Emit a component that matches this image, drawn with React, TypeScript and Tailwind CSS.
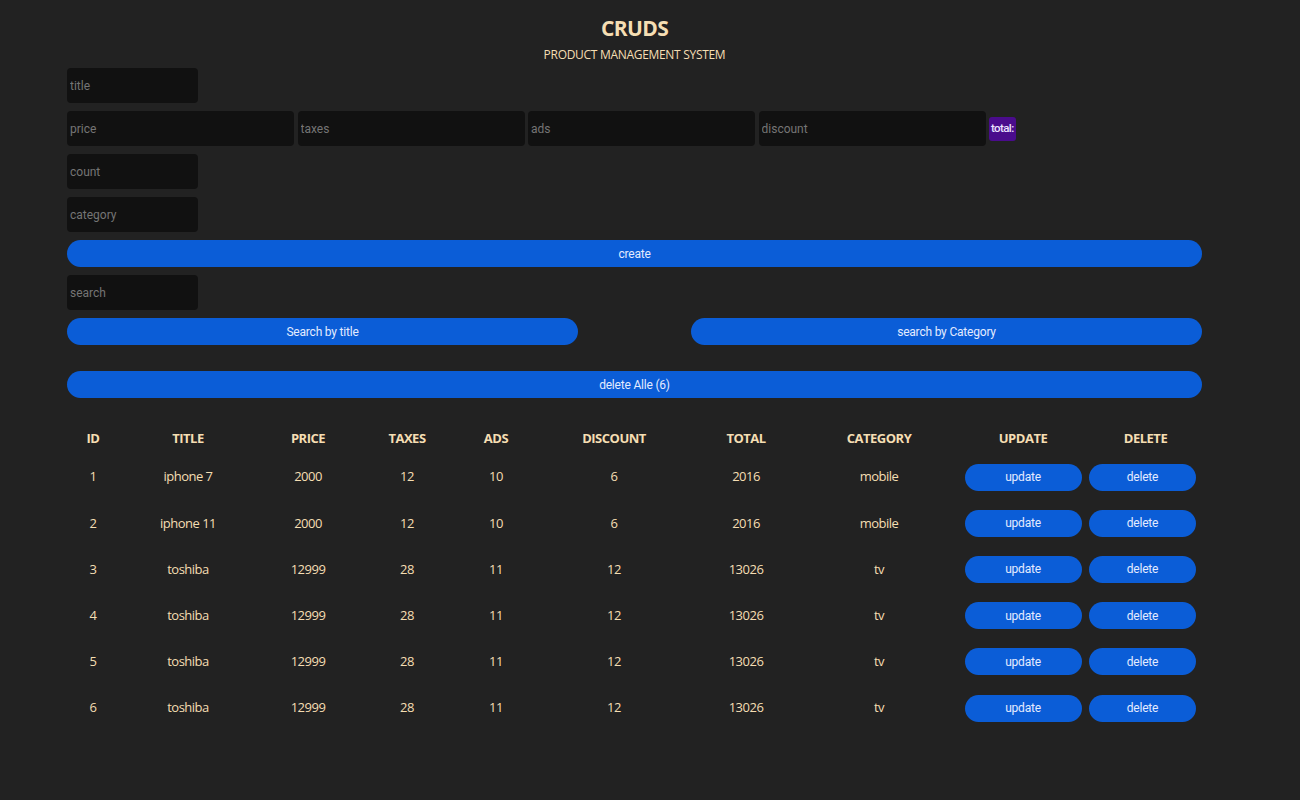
const products = [
  { id: 1, title: "iphone 7", price: 2000, taxes: 12, ads: 10, discount: 6, total: 2016, category: "mobile" },
  { id: 2, title: "iphone 11", price: 2000, taxes: 12, ads: 10, discount: 6, total: 2016, category: "mobile" },
  { id: 3, title: "toshiba", price: 12999, taxes: 28, ads: 11, discount: 12, total: 13026, category: "tv" },
  { id: 4, title: "toshiba", price: 12999, taxes: 28, ads: 11, discount: 12, total: 13026, category: "tv" },
  { id: 5, title: "toshiba", price: 12999, taxes: 28, ads: 11, discount: 12, total: 13026, category: "tv" },
  { id: 6, title: "toshiba", price: 12999, taxes: 28, ads: 11, discount: 12, total: 13026, category: "tv" },
]

const heads = [
  { name: "ID", w: "w-[52px]" },
  { name: "TITLE", w: "w-[138px]" },
  { name: "PRICE", w: "w-[102px]" },
  { name: "TAXES", w: "w-[96px]" },
  { name: "ADS", w: "w-[82px]" },
  { name: "DISCOUNT", w: "w-[154px]" },
  { name: "TOTAL", w: "w-[110px]" },
  { name: "CATEGORY", w: "w-[156px]" },
  { name: "UPDATE", w: "w-[132px]" },
  { name: "DELETE", w: "w-[113px]" },
]

function Field({ placeholder, wide }: { placeholder: string; wide?: boolean }) {
  return (
    <input
      type="text"
      placeholder={placeholder}
      className={`h-[35px] rounded-[4px] bg-[#111111] px-[3px] font-['Roboto',sans-serif] text-[12px] text-[#d0d0d0] outline-none placeholder:text-[#757575] ${wide ? "w-[227px]" : "w-[131px]"}`}
    />
  )
}

function Btn({ children, className = "" }: { children: React.ReactNode; className?: string }) {
  return (
    <button
      type="button"
      className={`h-[27px] rounded-full bg-[#0b5dd7] font-['Roboto',sans-serif] text-[12px] tracking-[-0.2px] text-[#e3ebff] ${className}`}>
      {children}
    </button>
  )
}

export default function App() {
  return (
    <div className="min-h-[800px] bg-[#222222] font-['Open_Sans',sans-serif] text-[#f5deb3]">
      <div className="ml-[67px] w-[1135px] pt-[13px]">
        <div className="flex flex-col items-center">
          <h1 className="text-[21px] font-bold leading-[30px] tracking-[-0.6px]">CRUDS</h1>
          <p className="mt-[3px] text-[12px] leading-[18px] tracking-[-0.3px]">PRODUCT MANAGEMENT SYSTEM</p>
        </div>

        <div className="mt-[4px] flex flex-col gap-[8px]">
          <Field placeholder="title" />
          <div className="flex items-center gap-[3.5px]">
            <Field placeholder="price" wide />
            <Field placeholder="taxes" wide />
            <Field placeholder="ads" wide />
            <Field placeholder="discount" wide />
            <span className="flex h-[24px] items-center rounded-[3px] bg-[#4a0c8c] px-[2px] font-['Roboto',sans-serif] text-[11.5px] font-medium tracking-[-0.6px] text-[#ece4ff]">
              total:
            </span>
          </div>
          <Field placeholder="count" />
          <Field placeholder="category" />
          <Btn className="w-full">create</Btn>
          <Field placeholder="search" />
          <div className="flex justify-between">
            <Btn className="w-[511px]">Search by title</Btn>
            <Btn className="w-[511px]">search by Category</Btn>
          </div>
          <Btn className="mt-[18px] w-full">delete Alle (6)</Btn>
        </div>

        <table className="mt-[25px] table-fixed border-collapse text-center text-[13px]">
          <thead>
            <tr className="h-[31px]">
              {heads.map((h) => (
                <th key={h.name} className={`${h.w} font-bold tracking-[-0.5px]`}>
                  {h.name}
                </th>
              ))}
            </tr>
          </thead>
          <tbody>
            {products.map((p) => (
              <tr key={p.id} className="h-[46.2px] tracking-[-0.5px]">
                <td>{p.id}</td>
                <td>{p.title}</td>
                <td>{p.price}</td>
                <td>{p.taxes}</td>
                <td>{p.ads}</td>
                <td>{p.discount}</td>
                <td>{p.total}</td>
                <td>{p.category}</td>
                <td>
                  <Btn className="w-[117px]">update</Btn>
                </td>
                <td className="text-left">
                  <Btn className="w-[107px]">delete</Btn>
                </td>
              </tr>
            ))}
          </tbody>
        </table>
      </div>
    </div>
  )
}
